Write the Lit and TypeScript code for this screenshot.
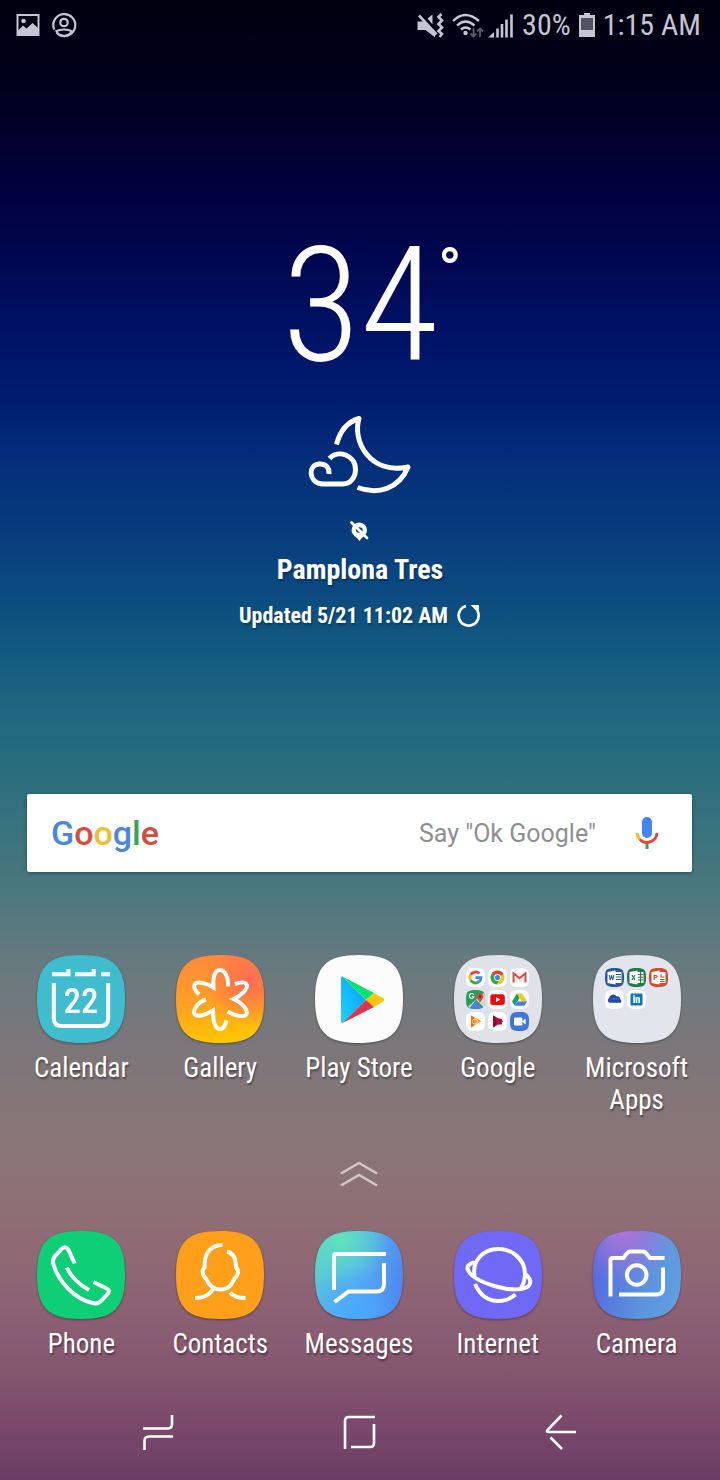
import { LitElement, html, svg, css, type TemplateResult } from "lit";
import { customElement, property } from "lit/decorators.js";

const SQUIRCLE =
  "M44 0C77 0 88 11 88 44S77 88 44 88 0 77 0 44 11 0 44 0Z";
const MINI =
  "M9.5 0C17.3 0 19 1.7 19 9.5S17.3 19 9.5 19 0 17.3 0 9.5 1.7 0 9.5 0Z";

const mini = (col: number, row: number, fill: string, art: unknown) => svg`
  <g transform="translate(${12 + col * 22} ${13 + row * 22})">
    <path d=${MINI} fill=${fill} />
    ${art}
  </g>`;

const officeTile = (letter: string, color: string, lines: string) => svg`
  <rect x="9" y="4" width="7.5" height="11" fill="#fff" />
  <path d=${lines} stroke=${color} stroke-width="1.1" fill="none" />
  <path d="M2.5 4 10.5 2.6V16.4L2.5 15Z" fill="#fff" />
  <text x="6.4" y="12.4" font-size="8" font-weight="700" text-anchor="middle" fill=${color}>${letter}</text>`;

const mediaTriangle = (a: string, b: string) => svg`
  <path d="M5 3.6 15.6 9.3 5 15.4Z" fill=${a} />
  <path d="M5 3.6 8.2 5.3V13.6L5 15.4Z" fill=${b} />`;

const ART: Record<string, TemplateResult> = {
  calendar: svg`
    <path d=${SQUIRCLE} fill="#40bccf" />
    <path class="line" d="M15 19.3H31.5V14M38 19.3H56.7V14M64 19.3H73M16.8 28V63Q16.8 71 25 71H63Q71.2 71 71.2 63V28" />
    <text class="day" x="44" y="58" text-anchor="middle">22</text>`,
  gallery: svg`
    <defs>
      <linearGradient id="gal" x1="0.4" y1="0" x2="0.55" y2="1">
        <stop offset="0" stop-color="#ff8a3c" /><stop offset=".5" stop-color="#ffa022" /><stop offset="1" stop-color="#ffc800" />
      </linearGradient>
      <radialGradient id="galHot" cx=".82" cy=".3" r=".5">
        <stop offset="0" stop-color="#ff6a55" /><stop offset="1" stop-color="#ff6a55" stop-opacity="0" />
      </radialGradient>
    </defs>
    <path d=${SQUIRCLE} fill="url(#gal)" />
    <path d=${SQUIRCLE} fill="url(#galHot)" />
    <path class="line" d="M52 31.500C52.500 22 49 15 44 15S36.500 22 37.500 32.500C32 29 24 26.500 20 28C16.500 30 18 35 23 39.500
      M30 44.500C22 47 17 54 18.500 59C21 62.500 29 60 37 55.500C37 66 39 74 44 74C47.500 74 49.500 70 50.500 65.500
      M51.500 56.500C58 60.500 67 62.500 70 60C73.500 56 66 47.500 57.500 44C65 41 73 33 70.500 29.500C69 26.500 64.500 27 59 29" />`,
  play: svg`
    <defs>
      <linearGradient id="ply" x1="1" y1="0" x2="0" y2="1">
        <stop offset="0" stop-color="#0a9bff" /><stop offset="1" stop-color="#18d6ff" />
      </linearGradient>
    </defs>
    <path d=${SQUIRCLE} fill="#fcfcfc" />
    <path d="M27.500 21.500Q26 21 26 23.500V66Q26 68.500 27.500 68L51 45Z" fill="url(#ply)" />
    <path d="M27.500 21.500 59 38 51 45Z" fill="#06e36f" />
    <path d="M59 38 68 43Q70.500 44.800 68 46.500L59 52 51 45Z" fill="#ffc60a" />
    <path d="M27.500 68 59 52 51 45Z" fill="#e3334b" />`,
  google: svg`
    <path d=${SQUIRCLE} fill="#dfe2e8" />
    ${mini(0, 0, "#fff", svg`
      <g fill="none" stroke-width="2.800">
        <path d="M13.400 5.600A5.500 5.500 0 0 0 4.700 6.800" stroke="#ea4335" />
        <path d="M4.700 6.800A5.500 5.500 0 0 0 4.700 12.200" stroke="#fbbc05" />
        <path d="M4.700 12.200A5.500 5.500 0 0 0 13 13.700" stroke="#34a853" />
        <path d="M13 13.700A5.500 5.500 0 0 0 15 9.700H9.500" stroke="#4285f4" />
      </g>`)}
    ${mini(1, 0, "#fff", svg`
      <circle cx="9.500" cy="9.500" r="7" fill="#fbc116" />
      <path d="M9.500 9.500 3.500 6A7 7 0 0 1 15.500 6Z" fill="#db4437" />
      <path d="M9.500 9.500 3.500 6A7 7 0 0 0 8.600 16.500L12 11Z" fill="#2da94f" />
      <circle cx="9.500" cy="9.500" r="3.400" fill="#fff" />
      <circle cx="9.500" cy="9.500" r="2.600" fill="#4285f4" />`)}
    ${mini(2, 0, "#fff", svg`
      <path d="M3 5H16V14.500H3Z" fill="#eee" />
      <path d="M3.500 14.500V5.300L9.500 10.300 15.500 5.300V14.500" fill="none" stroke="#d54b3d" stroke-width="1.900" />`)}
    ${mini(0, 1, "#2a9d57", svg`
      <path d="M2 16.800 17.500 3Q19 5 19 9.500 19 15 17.500 17.300L10 9.800 4 18Z" fill="#d6d9dc" />
      <path d="M3.500 18 9.700 11 16 18Q13 19 9.500 19 6 19 3.500 18Z" fill="#4a80e8" />
      <path d="M14 3A3.600 3.600 0 0 1 17.400 7C17 9.500 14.500 10 14 14 13.500 10 10.800 9.500 10.400 7A3.600 3.600 0 0 1 14 3Z" fill="#dd4b3e" />
      <circle cx="14" cy="6.500" r="1.300" fill="#84231c" />
      <path d="M7.800 4.600A2.400 2.400 0 1 0 8 6.800H6" fill="none" stroke="#fff" stroke-width="1.100" />`)}
    ${mini(1, 1, "#fff", svg`
      <rect x="2.300" y="4.300" width="14.500" height="10.600" rx="2.500" fill="#f50707" />
      <path d="M8 7 12.200 9.600 8 12.200Z" fill="#fff" />`)}
    ${mini(2, 1, "#fff", svg`
      <path d="M6.800 3.500H12.200L17 11.500H11.700Z" fill="#fbc61c" />
      <path d="M6.800 3.500 9.500 8 4.800 15.800 2 11.500Z" fill="#1ba261" />
      <path d="M7.400 11.500H17L14.300 15.800H4.800Z" fill="#3f7de8" />`)}
    ${mini(0, 2, "#fff", svg`
      ${mediaTriangle("#f6a32a", "#ef6c1b")}
      <circle cx="9" cy="9.500" r="2.600" fill="none" stroke="#fff0a8" stroke-width=".8" />`)}
    ${mini(1, 2, "#fff", svg`
      ${mediaTriangle("#d0103f", "#8f0d35")}
      <path d="M8.200 6V12.500H14V7Z" fill="#b60e3b" />`)}
    ${mini(2, 2, "#3f74d8", svg`
      <rect x="4" y="5.600" width="8.400" height="8" rx="1.200" fill="#fff" />
      <path d="M12 9.500 15.600 6.500V12.600Z" fill="#fff" />`)}`,
  microsoft: svg`
    <path d=${SQUIRCLE} fill="#e2e5eb" />
    ${mini(0, 0, "#2d569c", officeTile("W", "#2d569c", "M10.500 6.500H16M10.500 9H16M10.500 11.500H16"))}
    ${mini(1, 0, "#22794a", officeTile("X", "#22794a", "M10.500 6.500H16M10.500 9.200H16M10.500 12H16M13.600 4V15"))}
    ${mini(2, 0, "#d24a2c", officeTile("P", "#d24a2c", "M11 11.500H15.500M11 13.500H15.500M12 6V9H15.500"))}
    ${mini(0, 1, "#fff", svg`
      <path d="M4.500 12.800A2.600 2.600 0 0 1 4 8.200 4.200 4.200 0 0 1 11.500 6.300 3.600 3.600 0 0 1 15.400 9.400 1.900 1.900 0 0 1 15.300 12.800Z" fill="#1d49a8" />
      <path d="M4.800 10.800Q6.500 7.800 9.500 9 12.500 7.600 14 9.800" fill="none" stroke="#4f78cf" stroke-width=".8" />`)}
    ${mini(1, 1, "#fff", svg`
      <rect x="3.500" y="3.500" width="12" height="12" rx="1.200" fill="#0f75b5" />
      <text x="9.600" y="13.400" font-size="10.500" font-weight="800" text-anchor="middle" fill="#fff">in</text>`)}`,
  phone: svg`
    <path d=${SQUIRCLE} fill="#0ecf76" />
    <path class="line" d="M37.700 32.500 31.500 19Q29 14.500 25 17.500L18 25Q15 28 16.500 33.500C21.500 51 38 68 55.500 72Q61 73.500 64.500 69.500L71 62.500Q73.500 59.500 69.500 57.500L56.500 51M29.700 36.500C34 45.500 42 53.500 52 59" />`,
  contacts: svg`
    <path d=${SQUIRCLE} fill="#ff9f1a" />
    <path class="line" d="M46.500 14C36 14 29 21.500 29 30.500Q28.500 33 28.700 36.500C25.500 38.500 26 44.500 30 47.500C32.500 53.500 36 58.500 44.500 58.500C53 58.500 55.500 53.500 58.500 47.500C62.500 44.500 63 38.500 60 36.500C60 28.500 58.500 22 51 20.500M37.500 57C34 64.500 27.500 67 19 67M54 61.500C57.500 66 63 67 69.500 67" />`,
  messages: svg`
    <defs>
      <linearGradient id="msg" x1="0" y1=".3" x2="1" y2=".6">
        <stop offset="0" stop-color="#59cbd2" /><stop offset=".45" stop-color="#55b0f0" /><stop offset="1" stop-color="#4f86ee" />
      </linearGradient>
      <radialGradient id="msgMint" cx=".3" cy=".1" r=".55">
        <stop offset="0" stop-color="#5fe3bb" /><stop offset="1" stop-color="#5fe3bb" stop-opacity="0" />
      </radialGradient>
      <radialGradient id="msgSky" cx=".45" cy="1" r=".6">
        <stop offset="0" stop-color="#4aa9ff" /><stop offset="1" stop-color="#4aa9ff" stop-opacity="0" />
      </radialGradient>
    </defs>
    <path d=${SQUIRCLE} fill="url(#msg)" />
    <path d=${SQUIRCLE} fill="url(#msgMint)" />
    <path d=${SQUIRCLE} fill="url(#msgSky)" />
    <path class="line" d="M19 59V25.500Q19 23 21.500 23H71M69 32V53Q69 60.500 61.500 60.500H33.500L19.500 71" />`,
  internet: svg`
    <path d=${SQUIRCLE} fill="#7069f6" />
    <path class="line" d="M20.500 45C18 29 30 18 44 18S71 28 71 43C71 48 69.500 53 67 57M21 53C26 64 34 70 44 70Q54 70 61.500 63.500
      M23.500 31C17 31.500 13 34 13.500 38C16 46 30 52 42 55.500C56 59.500 71 59.500 75 54.500C78 50 75 45 70.500 42.500" />`,
  camera: svg`
    <defs>
      <linearGradient id="cam" x1="0" y1=".4" x2="1" y2=".6">
        <stop offset="0" stop-color="#5569e2" /><stop offset=".6" stop-color="#5b93dc" /><stop offset="1" stop-color="#609fe0" />
      </linearGradient>
      <radialGradient id="camPink" cx=".35" cy="0" r=".6">
        <stop offset="0" stop-color="#b173d8" /><stop offset="1" stop-color="#b173d8" stop-opacity="0" />
      </radialGradient>
    </defs>
    <path d=${SQUIRCLE} fill="url(#cam)" />
    <path d=${SQUIRCLE} fill="url(#camPink)" />
    <path class="line" d="M17.500 65.500V29Q17.500 27 19.500 27H30.500Q33 23 35.500 21Q36.500 20.500 38 20.500H50Q51.500 20.500 52.500 21.500L57 27H71.500M70 36.500V57Q70 63.500 63.500 63.500H26" />
    <circle class="line" cx="43.700" cy="44" r="9.800" />`,
};

@customElement("app-tile")
class AppTile extends LitElement {
  @property() name = "";
  @property() art = "";

  static styles = css`
    :host {
      display: block;
      min-width: 0;
    }
    .tile {
      display: flex;
      flex-direction: column;
      align-items: center;
      gap: 9px;
      width: 100%;
      margin: 0;
      padding: 0;
      border: 0;
      background: none;
      color: #fff;
      cursor: pointer;
      font: 400 27px/32px "Roboto Condensed", "Roboto", sans-serif;
      text-shadow: 1px 2px 2px rgba(0, 0, 0, 0.4);
    }
    .icon {
      width: 88px;
      height: 88px;
      overflow: visible;
      filter: drop-shadow(0 1px 1px rgba(0, 0, 0, 0.35));
      text-shadow: none;
    }
    .line {
      fill: none;
      stroke: #fff;
      stroke-width: 4;
    }
    .day {
      fill: #fff;
      font-size: 35px;
      font-weight: 500;
    }
    .name {
      max-width: 120px;
    }
  `;

  render() {
    return html`<button class="tile" type="button">
      <svg class="icon" viewBox="0 0 88 88" aria-hidden="true">${ART[this.art]}</svg>
      <span class="name">${this.name}</span>
    </button>`;
  }
}

@customElement("app-root")
class AppRoot extends LitElement {
  private home = [
    ["Calendar", "calendar"],
    ["Gallery", "gallery"],
    ["Play Store", "play"],
    ["Google", "google"],
    ["Microsoft Apps", "microsoft"],
  ];
  private dock = [
    ["Phone", "phone"],
    ["Contacts", "contacts"],
    ["Messages", "messages"],
    ["Internet", "internet"],
    ["Camera", "camera"],
  ];

  static styles = css`
    :host {
      display: flex;
      flex-direction: column;
      min-height: 100vh;
      box-sizing: border-box;
      color: #fff;
      font-family: "Roboto Condensed", "Roboto", sans-serif;
      background: linear-gradient(
        #01000e 0%, #01001c 6%, #01003a 12%, #00064e 17%, #001164 22%, #001c70 27%,
        #032a78 30%, #07397d 35%, #0b4a80 40%, #115b80 44%, #1f677f 48%, #2d6f7f 53%,
        #46777e 59%, #617a80 64%, #72797c 67.500%, #7f7679 72%, #8a7577 78%, #8f6d75 83%,
        #8d6273 88%, #83556f 93%, #7b4a6b 96%, #6b3c66 100%
      );
    }
    svg {
      display: block;
      overflow: visible;
    }
    button {
      margin: 0;
      padding: 0;
      border: 0;
      background: none;
      color: inherit;
      font: inherit;
      cursor: pointer;
    }
    .status {
      display: flex;
      align-items: center;
      justify-content: space-between;
      height: 50px;
      padding: 0 19px 0 16px;
      color: #c5c5d3;
      font-size: 30px;
      line-height: 32px;
    }
    .group {
      display: flex;
      align-items: center;
      gap: 8px;
    }
    .notices {
      gap: 12px;
    }
    .weather {
      display: flex;
      flex-direction: column;
      align-items: center;
      margin-top: 198px;
    }
    .temp {
      display: flex;
      margin-left: 24px;
      font-size: 160px;
      line-height: 116px;
      font-weight: 300;
    }
    .degree {
      font-size: 62px;
      line-height: 44px;
      font-weight: 500;
    }
    .moon {
      margin-top: 52px;
    }
    .pin {
      margin-top: 27px;
    }
    .place {
      margin-top: 11px;
      font-size: 28px;
      line-height: 36px;
      font-weight: 700;
      text-shadow: 1px 2px 2px rgba(0, 0, 0, 0.3);
    }
    .updated {
      display: flex;
      align-items: center;
      gap: 9px;
      margin-top: 12px;
      font-size: 22px;
      line-height: 32px;
      font-weight: 700;
      text-shadow: 1px 2px 2px rgba(0, 0, 0, 0.3);
    }
    .search {
      display: flex;
      align-items: center;
      height: 78px;
      box-sizing: border-box;
      margin: 162px 28px 0 27px;
      padding: 0 33px 0 24px;
      border-radius: 2px;
      background: #fff;
      box-shadow: 0 1px 4px rgba(0, 0, 0, 0.35);
    }
    .logo {
      font: 500 34px/40px "Roboto", sans-serif;
    }
    .blue { color: #4a86e0; }
    .red { color: #d94a3e; }
    .yellow { color: #efbe2e; }
    .green { color: #3aa35a; }
    .query {
      flex: 1;
      min-width: 0;
      margin: 0 39px 0 16px;
      padding: 2px 0 0;
      border: 0;
      outline: 0;
      background: none;
      color: #555;
      font: 400 25px/32px "Roboto", sans-serif;
      text-align: right;
    }
    .query::placeholder {
      color: #8f8f93;
      opacity: 1;
    }
    .apps {
      display: grid;
      grid-template-columns: repeat(5, 1fr);
      align-items: start;
      padding: 0 14px 0 12px;
    }
    .home {
      margin-top: 83px;
    }
    .drawer {
      align-self: center;
      margin: 44px 2px 43px 0;
    }
    .nav {
      display: flex;
      align-items: center;
      justify-content: space-between;
      padding: 0 143px 0 142px;
      margin-top: auto;
      height: 96px;
    }
  `;

  private tiles(list: string[][]) {
    return list.map(([name, art]) => html`<app-tile name=${name} art=${art}></app-tile>`);
  }

  render() {
    return html`
      <header class="status">
        <div class="group notices">
          <svg width="24" height="24" viewBox="0 0 24 24" fill="none" stroke="#c5c5d3" stroke-width="2">
            <path d="M1.500 2H22.500V22H1.500Z" />
            <circle cx="7.500" cy="8" r="2.300" fill="#c5c5d3" stroke="none" />
            <path d="M2 22V17.500L7 12.500 10.500 15.500 16.500 10 22 15V22Z" fill="#c5c5d3" stroke="none" />
          </svg>
          <svg width="24" height="24" viewBox="0 0 24 24" fill="none" stroke="#c5c5d3" stroke-width="2.200">
            <path d="M2.200 16.500A11 11 0 1 1 7.500 22" />
            <circle cx="12" cy="9.500" r="3.700" />
            <path d="M3.500 18.500Q7.500 16.500 12 16.500T20.500 18.500M4.500 19.500Q7 22.500 12 23 17 22.500 19.500 19.500" />
          </svg>
        </div>
        <div class="group">
          <svg width="27" height="25" viewBox="0 0 27 25" fill="#c5c5d3">
            <path d="M.500 8.500H7.500L18 19.500V24.500L8.500 17H.500Z M10.500 5.500 15.500 1.500V11.500Z" />
            <path d="M2 2.500 19.500 21.500" stroke="#c5c5d3" stroke-width="2.600" />
            <path d="M24.500 1 21.500 4 25 7.500 21.500 11 25 14.500 21.500 18 25 21 22.500 24" fill="none" stroke="#c5c5d3" stroke-width="2.600" />
          </svg>
          <svg width="62" height="25" viewBox="0 0 62 25" fill="none" stroke="#c5c5d3">
            <path d="M1 8Q13-4 27 8M5 12.500Q13.500 4.500 22.500 12.500M9 16.500Q13.500 12.500 18.500 16.500" stroke-width="2.400" />
            <circle cx="13.500" cy="20" r="2.200" fill="#c5c5d3" stroke="none" />
            <path d="M21.500 15V23M18.500 20.500 21.500 23.500 24.500 20.500M28 24V16M25 18.500 28 15.500 31 18.500" stroke="#5b5a6e" stroke-width="1.800" />
            <path d="M36 24.500 42 19V24.500Z" fill="#c5c5d3" stroke="none" />
            <path d="M45.500 24.500V15.500M50 24.500V11M54.500 24.500V6.500M59.500 24.500V1.500" stroke-width="2.600" />
          </svg>
          <span>30%</span>
          <svg width="16" height="24" viewBox="0 0 16 24">
            <path d="M5 0H11V2H16V24H0V2H5Z" fill="#c5c5d3" />
            <path d="M2 5H14V17H2Z" fill="#535265" />
          </svg>
          <span>1:15 AM</span>
        </div>
      </header>

      <section class="weather">
        <div class="temp"><span>34</span><span class="degree">°</span></div>
        <svg class="moon" width="102" height="78" viewBox="0 0 102 78" fill="none" stroke="#fff" stroke-width="5" stroke-linejoin="round">
          <path d="M27.500 28.500C31 15 38 6 50 2.500C43 25 61 59 99 51C90 73 69 79 48.500 71.500" />
          <path d="M20.500 42.500C29 33 46.500 39 46.500 53.500C46.500 62 41 68 34 68H13C-1 66 -1 49 10 48C17 47.500 20.500 51.500 20 58" />
        </svg>
        <svg class="pin" width="20" height="20" viewBox="0 0 20 20">
          <path d="M9.500 1.500A7.800 7.800 0 0 1 17 9.200C17 14 11.500 16.500 9.500 20 7.500 16.500 1.500 14 1.500 9.200A7.800 7.800 0 0 1 9.500 1.500Z" fill="#fff" />
          <ellipse cx="9.300" cy="9" rx="3.400" ry="2.800" fill="#07397d" />
          <path d="M1.500 1.500 17 17" stroke="#fff" stroke-width="2.800" stroke-linecap="round" />
        </svg>
        <div class="place">Pamplona Tres</div>
        <div class="updated">
          <span>Updated 5/21 11:02 AM</span>
          <button type="button" aria-label="Refresh weather">
            <svg width="24" height="24" viewBox="0 0 24 24" fill="none" stroke="#fff" stroke-width="2.600">
              <path d="M9 2A10 10 0 1 0 20.500 7" />
              <path d="M13.500 1H22V9.500L19 6.500Z" fill="#fff" stroke="none" />
            </svg>
          </button>
        </div>
      </section>

      <form class="search">
        <span class="logo" aria-label="Google"><span class="blue">G</span><span class="red">o</span><span class="yellow">o</span><span class="blue">g</span><span class="green">l</span><span class="red">e</span></span>
        <input class="query" type="text" aria-label="Search Google" placeholder='Say "Ok Google"' />
        <button type="button" aria-label="Voice search">
          <svg width="24" height="32" viewBox="0 0 24 32" fill="none">
            <rect x="7" y="0" width="10" height="21" rx="5" fill="#4285f4" />
            <path d="M12 26V32" stroke="#34a853" stroke-width="3" />
            <path d="M2 16A10 10 0 0 0 5 22.500" stroke="#fbbc05" stroke-width="3" />
            <path d="M5 22.500A10 10 0 0 0 22 16" stroke="#ea4335" stroke-width="3" />
          </svg>
        </button>
      </form>

      <section class="apps home">${this.tiles(this.home)}</section>

      <button class="drawer" type="button" aria-label="All apps">
        <svg width="38" height="28" viewBox="0 0 38 28" fill="none" stroke="#d3c5c8" stroke-width="2.600">
          <path d="M1 13.500 19 3 37 13.500M1 25.500 19 15 37 25.500" />
        </svg>
      </button>

      <section class="apps">${this.tiles(this.dock)}</section>

      <nav class="nav">
        <button type="button" aria-label="Recent apps">
          <svg width="32" height="36" viewBox="0 0 32 36" fill="none" stroke="#fff" stroke-width="2.600">
            <path d="M1 14.500H25.500Q30 14.500 30 10V1M31 22.500H7Q2.500 22.500 2.500 27V36" />
          </svg>
        </button>
        <button type="button" aria-label="Home">
          <svg width="33" height="34" viewBox="0 0 33 34" fill="none" stroke="#fff" stroke-width="2.600">
            <path d="M2 34V6Q2 2 6 2H32M31 9V28Q31 32 27 32H8" />
          </svg>
        </button>
        <button type="button" aria-label="Back">
          <svg width="32" height="36" viewBox="0 0 32 36" fill="none" stroke="#fff" stroke-width="2.600">
            <path d="M16.500 1.500 2.500 16Q1 18 3 18H31M5.500 23.500 17 35" />
          </svg>
        </button>
      </nav>
    `;
  }
}
